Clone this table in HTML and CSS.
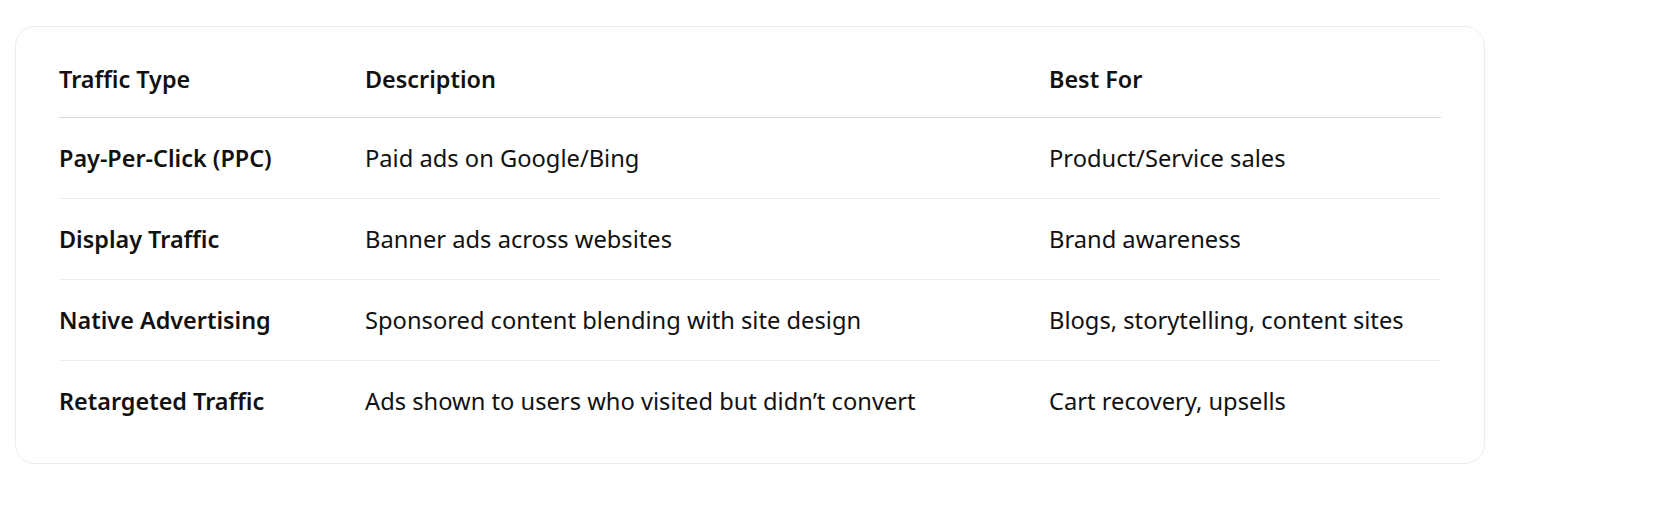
FILE: index.html
```html
<!DOCTYPE html>
<html lang="en">
<head>
<meta charset="utf-8">
<title>Traffic Types</title>
<link rel="stylesheet" href="styles.css">
</head>
<body>
<div class="page">
  <div class="card">
    <table class="traffic-table">
      <colgroup>
        <col class="col-type">
        <col class="col-desc">
        <col class="col-best">
      </colgroup>
      <thead>
        <tr>
          <th>Traffic Type</th>
          <th>Description</th>
          <th>Best For</th>
        </tr>
      </thead>
      <tbody>
        <tr>
          <td class="name">Pay-Per-Click (PPC)</td>
          <td>Paid ads on Google/Bing</td>
          <td>Product/Service sales</td>
        </tr>
        <tr>
          <td class="name">Display Traffic</td>
          <td>Banner ads across websites</td>
          <td>Brand awareness</td>
        </tr>
        <tr>
          <td class="name">Native Advertising</td>
          <td>Sponsored content blending with site design</td>
          <td>Blogs, storytelling, content sites</td>
        </tr>
        <tr>
          <td class="name">Retargeted Traffic</td>
          <td>Ads shown to users who visited but didn’t convert</td>
          <td>Cart recovery, upsells</td>
        </tr>
      </tbody>
    </table>
  </div>
</div>
</body>
</html>
```

FILE: styles.css
```css
html, body {
  margin: 0;
  padding: 0;
  background: #ffffff;
}

body {
  font-family: "Noto Sans", "Open Sans", "DejaVu Sans", sans-serif;
  color: #111111;
}

.page {
  padding: 26px 0 0 15px;
}

.card {
  width: 1470px;
  height: 438px;
  box-sizing: border-box;
  border: 1px solid #ececec;
  border-radius: 20px;
  padding: 14px 43px 23px 43px;
}

.traffic-table {
  width: 1382px;
  border-collapse: collapse;
  table-layout: fixed;
  font-size: 23.7px;
  line-height: 32px;
}

.col-type { width: 306px; }
.col-desc { width: 684px; }
.col-best { width: 392px; }

.traffic-table th {
  text-align: left;
  font-weight: 600;
  font-size: 23.4px;
  padding: 0;
  height: 76px;
  vertical-align: middle;
  border-bottom: 1px solid #d9d9d9;
}

.traffic-table td {
  padding: 0;
  height: 80px;
  vertical-align: middle;
  border-bottom: 1px solid #ededed;
}

.traffic-table tbody tr:last-child td {
  border-bottom: none;
}

.traffic-table td.name {
  font-weight: 600;
  font-size: 23.4px;
}
```
